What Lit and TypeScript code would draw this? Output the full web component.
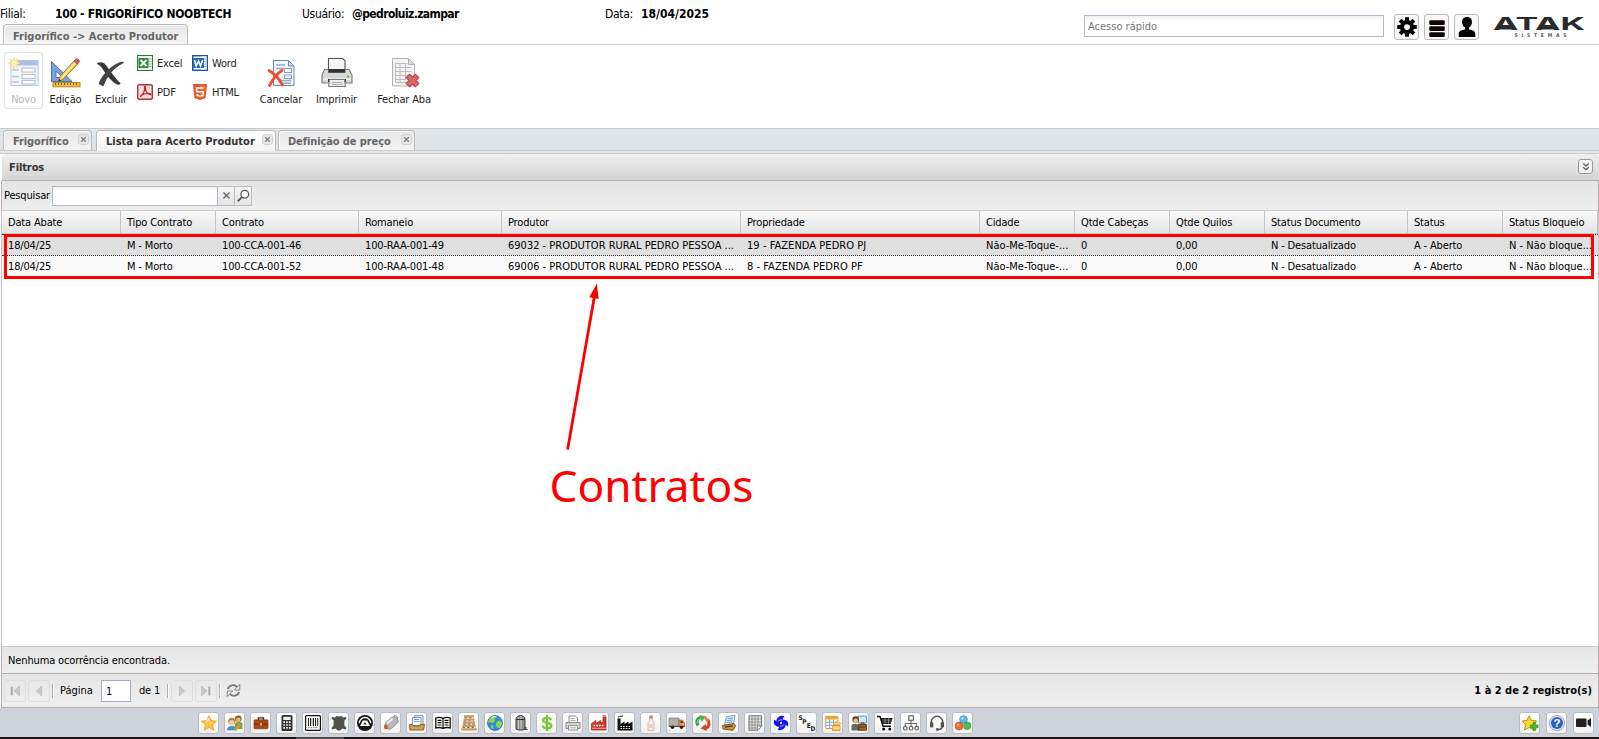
import { LitElement, html, svg, css } from "lit";
import { customElement, property } from "lit/decorators.js";
import { classMap } from "lit/directives/class-map.js";

/* 16x16 artwork for the shortcut bar and the small toolbar actions */
const ICONS: Record<string, unknown> = {
  star: svg`<path d="M8 .8 10.2 5.6 15.4 6.200 11.600 9.800 12.600 15 8 12.400 3.400 15 4.400 9.800 .6 6.200 5.800 5.600Z" fill="#fcc44a" stroke="#e89d28" stroke-width=".9"/><path d="M8 2.500 9.500 6.300 4 6.800Z" fill="#ffe9a8"/>`,
  people: svg`<path d="M8 9c1-3 7-3 7.500 0v5H8z" fill="#6fae3c"/><circle cx="11.300" cy="3.800" r="3.300" fill="#8d5a2b"/><circle cx="11.300" cy="4.800" r="2.300" fill="#e9b98a"/><path d="M.3 15c0-5 9-5 9.500 0z" fill="#4c93dd" stroke="#2b66ad" stroke-width=".5"/><circle cx="4.800" cy="6.300" r="3.500" fill="#b97f38"/><circle cx="4.800" cy="7.500" r="2.500" fill="#f4cfa3"/><path d="M8 14.800 13.800 8.800" stroke="#f0902a" stroke-width="2.400"/>`,
  briefcase: svg`<path d="M5.500 5V2.800h5V5" fill="none" stroke="#4a2410" stroke-width="1.300"/><rect x="1" y="4.800" width="14" height="9" rx="1" fill="#a64a1c" stroke="#6d2c0e" stroke-width=".6"/><path d="M1 9.200h14" stroke="#6d2c0e"/><rect x="7" y="8.200" width="2" height="2" fill="#e8c070"/>`,
  calc: svg`<rect x="2.500" y="0" width="11" height="16" rx="1.500" fill="#333"/><rect x="4.300" y="1.800" width="7.400" height="3.200" fill="#eee"/><path d="M4.300 7.200h7.400M4.300 10h7.400M4.300 12.900h7.400" stroke="#eee" stroke-width="1.700" stroke-dasharray="1.700 1.100"/>`,
  barcode: svg`<rect x=".6" y=".6" width="14.800" height="14.800" rx="1" fill="#fff" stroke="#111" stroke-width="1.200"/><path d="M3.500 3v8M5.500 3v8M8.500 3v8M10.500 3v8M12.700 3v8" stroke="#222"/><path d="M7 3v8" stroke="#222" stroke-width=".5"/><path d="M3 12.700h10" stroke="#777" stroke-dasharray="1 .6"/>`,
  hide: svg`<path d="M1 2 4 2.600 5.500 1 8 1.500 10.500 1 12 2.600 15 2 15.500 3.500 13.400 5.500 13.400 10.500 15.500 13 14.500 14.500 11.500 13.500 9 15.500H7L4.500 13.500 1.500 14.500 .5 13 2.600 10.500 2.600 5.500 .5 3.500Z" fill="#51524d"/>`,
  atak: svg`<circle cx="8" cy="8" r="8" fill="#161616"/><path d="M2.300 8.200A5.700 5.700 0 0 1 13.700 8.200" fill="none" stroke="#fff" stroke-width="1.300"/><path d="M5.900 5.500h4.200L13 11H3Z" fill="#fff"/><path d="M8 7.300 9.700 9.600H6.300Z" fill="#161616"/>`,
  mouse: svg`<rect x="1.200" y="4.200" width="14.500" height="8.200" rx="4.100" transform="rotate(-42 8 8)" fill="#b9b9b9" stroke="#858585" stroke-width=".8"/><path d="M4 8.500 9.500 3.500" stroke="#eee" stroke-width="1.800"/><path d="M1 11.700c.3-1.700 1.300-2.200 2.500-1.700s2.200 2 1.200 3.500-4 1-3.700-1.800z" fill="#d8543c"/><path d="M14.500 4c0-2.500-1-3.500-3.500-3.700" stroke="#888" fill="none"/>`,
  tray: svg`<path d="M5.500 .6h8.500v9h-8.500z" fill="#e8f0fb" stroke="#5b7fb8" stroke-width=".8"/><path d="M3.500 2.500h8.500v8H3.500z" fill="#fff" stroke="#5b7fb8" stroke-width=".8"/><path d="M5 4.500h5.500M5 6.500h5.500" stroke="#7fa0cc"/><path d="M.5 9.500h3l1 1.500h6l1-1.500h4l-1 5.500H1z" fill="#d6a156" stroke="#7f511a" stroke-width=".9"/>`,
  book: svg`<path d="M.8 3c2.500-1 5-.8 7.200.3 2.200-1.100 4.700-1.300 7.200-.3v10c-2.500-.8-5-.6-7.200.3-2.200-.9-4.700-1.100-7.200-.3z" fill="#fff" stroke="#111" stroke-width="1.300"/><path d="M8 3v10.500M2.500 5.300h4M2.500 7.600h4M2.500 10h4M9.500 5.300h4M9.500 7.600h4M9.500 10h4" stroke="#111" stroke-width="1.200"/>`,
  pallet: svg`<path d="M3 1.300h10M2.600 4.500h10.800M2 7.700h12M1.400 10.900h13.200M.3 14.300h15.400" stroke="#c79a62" stroke-width="2.200"/><path d="M3.500 2.800h9M2.800 6h10.400M2.300 9.200h11.400M1.500 12.500h13" stroke="#84602f" stroke-width=".9" stroke-dasharray="2.500 2"/>`,
  globe: svg`<circle cx="8" cy="8" r="7.500" fill="#2e8fe0" stroke="#1b64ae" stroke-width=".7"/><path d="M3 3.500C5 .8 8 .8 9 2L7.500 4.500 8 6.500 5.500 8 3 7 1.500 8C1 6 2 4.500 3 3.500zM9.500 7l3-1.500 2.500 2c0 3-2 5.500-4 6l-2-3zM4 10l2.500 1-1 3c-1.500-.8-2-2-1.500-4z" fill="#8fd83f"/><path d="M4.500 2.500C6 1.400 8 1.300 9.500 2" stroke="#d8f3ff" stroke-width="1.200" fill="none"/>`,
  silo: svg`<path d="M3 4C3 2 5.500.5 7.500.5S12 2 12 4v10c-2 1.500-7 1.500-9 0z" fill="#8c8c8c" stroke="#333" stroke-width=".9"/><path d="M5.500 2v12M8 1v13" stroke="#c9c9c9" stroke-width="1.200"/><path d="M3 4.500h9M10.500 14.500h4" stroke="#333"/><path d="M12.700 12v3" stroke="#555" stroke-width="1.600"/>`,
  dollar: svg`<path d="M8 0v16" stroke="#6cbf2c" stroke-width="2"/><path d="M12.200 5C11.500 3.300 10 2.800 8 2.800c-2.500 0-4 .9-4 2.500C4 9 12.300 6.600 12.300 10.400c0 1.900-1.800 2.800-4.300 2.800-2.200 0-3.900-.7-4.400-2.400" fill="none" stroke="#75cc31" stroke-width="2.300"/>`,
  printer: svg`<path d="M4 7V1h6.500L12.500 3v4" fill="#fafafa" stroke="#888" stroke-width=".9"/><path d="M1 7.500h14v6H1z" fill="#d9d9d9" stroke="#888"/><path d="M3.500 10.500h9V15h-9z" fill="#f4f4f4" stroke="#888" stroke-width=".9"/><path d="M5.500 3.500h4M5.500 5.500h5M5 12.800h6" stroke="#aaa"/>`,
  factoryRed: svg`<path d="M.5 15V8.500L5 5.500V8.500L9.500 5.500V8L12 7V1.500h3V15z" fill="#cf3a2c" stroke="#9d2118" stroke-width=".7"/><path d="M11.700 0h3.600v2h-3.600z" fill="#e98a7e"/><path d="M2.500 10.500h11" stroke="#fff" stroke-width="1.600" stroke-dasharray="1.600 1.200"/><path d="M1 13.300h14" stroke="#f0b0a4"/>`,
  factory: svg`<path d="M.5 15.500V3.500h3V9L7.500 6.500V9L11.500 6.500V9L15.500 6.500v9z" fill="#111"/><path d="M1 2.300C3 .2 4 2.200 6 .8" stroke="#111" fill="none"/><path d="M3.500 11.500h10M3.500 13.500h10" stroke="#fff" stroke-width="1.100" stroke-dasharray="1.400 1.300"/>`,
  bottle: svg`<path d="M6.500 3.500h3v2l1.500 2V15.500H5V7.500l1.500-2z" fill="#f7ece4" stroke="#c9aa9a" stroke-width=".7"/><path d="M6.300.5h3.400v2.800H6.300z" fill="#b4836a"/><path d="M5.500 9h5v4h-5z" fill="#e9cdbd"/>`,
  truck: svg`<path d="M0 3h10v8H0z" fill="#adadad" stroke="#777" stroke-width=".7"/><path d="M10 5h3.500L15.700 8v3.500H10z" fill="#ea9a55" stroke="#8d5529" stroke-width=".7"/><path d="M11.300 6h2l1.200 2h-3.200z" fill="#444"/><path d="M0 11.500h15.500" stroke="#643f28"/><circle cx="3.500" cy="12.300" r="1.700" fill="#222"/><circle cx="12.500" cy="12.300" r="1.700" fill="#222"/>`,
  recycle: svg`<path d="M3 10.500C.8 6.500 2 3.500 5.500 2.500" fill="none" stroke="#2f9e38" stroke-width="3.200"/><path d="M4.500 0l6.500 1.500L6.500 7z" fill="#46b34a"/><path d="M2.300 8.500C1.700 6.500 2.500 4.700 4.500 3.800" stroke="#a5dfa4" stroke-width="1" fill="none"/><path d="M12.500 4.500c2.800 3 1.800 7-1.500 8.500" fill="none" stroke="#d9432c" stroke-width="3.200"/><path d="M12 16 5.500 13.500 10.500 9z" fill="#d9432c"/><path d="M9.500 1.500 12.500 6" stroke="#f0826c" stroke-width="3"/>`,
  papers: svg`<path d="M5.500 1.500 14 .5 12.500 9 3.500 10z" fill="#e6f3ff" stroke="#4d84b8" stroke-width=".8"/><path d="M6.500 3.500 12 3M6 5.500 11.500 5M5.500 7.500 11 7" stroke="#5b9bd2"/><path d="M1.500 10.500 13 8.500 14.500 11 12 15.300 2 14z" fill="#c9903e" stroke="#7c4c15" stroke-width=".9"/><path d="M4 12 11.500 10.800" stroke="#5c3a10" stroke-width="1.300"/>`,
  grid: svg`<path d="M2 .8h12.500v10.500L10.500 15.300H2z" fill="#e2e2e2" stroke="#777" stroke-width="1.100"/><path d="M2 4h12.500M2 7h12.500M2 10h12.500M2 13h9M5 1v14M8 1v14M11 1v10.500" stroke="#8c8c8c" stroke-width=".9"/><path d="M14.500 11.300h-4v4z" fill="#fff" stroke="#777" stroke-width=".7"/>`,
  pinwheel: svg`<g fill="#1414f0"><path d="M7.500 7.500H3.500C3 4 5 1.500 8.500 .8L11.500 1 9.800 3.500 9.500 7z"/><path d="M8.500 7.500V4.500C12 4 14.500 5.500 15.200 8L15 11.500 12.500 9.800 9 9.500z"/><path d="M8.500 8.500H12.500C13 12 11 14.500 7.500 15.200L4.500 15 6.200 12.500 6.500 9z"/><path d="M7.500 8.500V12C4 12 1.500 10.500 .8 8L1 4.500 3.500 6.200 7 6.500z"/></g><path d="M5 6.500c1-1.500 2.500-2 4-1.500M11 9.500c-1 1.500-2.500 2-4 1.500" fill="none" stroke="#fff" stroke-width=".7"/><circle cx="8" cy="8" r=".9" fill="#fff"/>`,
  sped: svg`<g font-family="DejaVu Sans" font-size="6.500" font-weight="700" fill="#222"><text x="-.5" y="4.500">S</text><text x="3.300" y="9">P</text><text x="7.700" y="13">E</text><text x="11.600" y="16">D</text></g>`,
  tableCoins: svg`<path d="M.8 1.500h12v12H.8z" fill="#fff" stroke="#e9962e"/><path d="M1 2h11.500v2.500H1z" fill="#f3a53c"/><path d="M1 7.300h11.500M1 10.300h11.500M4.700 4.500v9M8.600 4.500v9" stroke="#6ba7dc"/><ellipse cx="12" cy="8.500" rx="3.500" ry="1.500" fill="#ffdc73" stroke="#d08b1c" stroke-width=".7"/><path d="M7.500 10.500h7.500v5H7.500z" fill="#f4b942" stroke="#d08b1c" stroke-width=".7"/><path d="M7.500 12h7.500M7.500 13.700h7.500" stroke="#fff0b5" stroke-width=".7"/>`,
  userCase: svg`<path d="M7 1h8.500v7H7z" fill="#cce6fb" stroke="#5492c8"/><path d="M.5 15.500V11c0-3 7.500-3 7.500 0v4.500z" fill="#5d6b62"/><circle cx="4.700" cy="4.500" r="3.300" fill="#6b3e18"/><circle cx="4.700" cy="5.700" r="2.300" fill="#f0c195"/><path d="M7.500 9.500h8v5.800h-8z" fill="#a6602a" stroke="#60300e" stroke-width=".8"/><path d="M10 9.300V8h3v1.300M7.500 12h8" stroke="#60300e" fill="none"/>`,
  cart: svg`<path d="M0 1.500h3L6 11.300h8" fill="none" stroke="#111" stroke-width="1.400"/><path d="M3.500 3H15.700L13.700 9H5.300z" fill="#111"/><path d="M5 5h10M5.500 7h9M8 3v6M11.500 3v6" stroke="#fff" stroke-width=".4"/><circle cx="6.700" cy="13.900" r="1.500" fill="#111"/><circle cx="12.800" cy="13.900" r="1.500" fill="#111"/>`,
  org: svg`<g fill="#fff" stroke="#666" stroke-width="1.200"><rect x="5.800" y=".8" width="4.500" height="4.500"/><circle cx="2.300" cy="13.200" r="1.800"/><circle cx="8" cy="13.200" r="1.800"/><circle cx="13.700" cy="13.200" r="1.800"/></g><path d="M8 5.500v5.500M2.300 11V8.500h11.400V11" fill="none" stroke="#666"/>`,
  headset: svg`<path d="M2.300 10V7a5.700 5.700 0 0 1 11.400 0v3c0 3-1.500 4.500-5 4.700" fill="none" stroke="#555" stroke-width="1.500"/><rect x="1" y="7" width="3.300" height="5.500" rx="1.300" fill="#555"/><rect x="11.700" y="7" width="3.300" height="5.500" rx="1.300" fill="#555"/><circle cx="8.300" cy="14.400" r="1.400" fill="#555"/>`,
  balls: svg`<path d="M8 4 4 11M8 4l4 7" stroke="#888"/><circle cx="8.500" cy="4.500" r="3.900" fill="#5cb7e8" stroke="#2f86bd" stroke-width=".6"/><circle cx="4" cy="11" r="3.900" fill="#ee6b33" stroke="#be4415" stroke-width=".6"/><circle cx="12.200" cy="10.800" r="3.700" fill="#59b957" stroke="#2d8a32" stroke-width=".6"/><circle cx="7.500" cy="3.300" r="1.100" fill="#d3f0ff"/><circle cx="3" cy="10" r="1.100" fill="#ffc5a8"/>`,
  starAdd: svg`<path d="M7 .8 9.200 5.200 14.500 6 11 9.500 12 14.800 7.200 12.500 2.500 15 3.500 9.800 .3 6 5 5.300Z" fill="#ffd630" stroke="#b08a10" stroke-width=".9"/><path d="M11 7.500h2.700V10H16v2.800h-2.300v2.700H11v-2.700H8.500V10H11z" fill="#44b92b" stroke="#2a8518" stroke-width=".6"/>`,
  help: svg`<circle cx="8" cy="8" r="7.600" fill="#dfe6f3" stroke="#8b97ad" stroke-width=".8"/><circle cx="8" cy="8" r="6" fill="#2c5fbe"/><text x="8" y="12.200" text-anchor="middle" font-family="Liberation Sans" font-size="11.500" font-weight="700" fill="#fff">?</text>`,
  camera: svg`<rect x="0" y="3.500" width="10.500" height="8.500" rx=".8" fill="#231f20"/><path d="M15 3v9L11.500 9.500v-4z" fill="#231f20"/>`,
  excel: svg`<rect x=".5" y=".5" width="15" height="15" fill="#eaf5e6" stroke="#2c7a34"/><rect x="9" y="1.500" width="5.500" height="13" fill="#fff"/><path d="M11.500 4h3M11.500 6.500h3M11.500 9h3M11.500 11.500h3" stroke="#7fb784"/><rect x="1.500" y="3" width="10" height="10" fill="#2f8a3c"/><path d="M3.500 5l6 6M9.500 5l-6 6" stroke="#fff" stroke-width="1.900"/>`,
  word: svg`<rect x=".7" y=".7" width="14.600" height="14.600" fill="#eaf1fb" stroke="#1f559e" stroke-width="1.400"/><rect x="9" y="1.500" width="5.500" height="13" fill="#fff"/><path d="M12 4h2.500M12 6.500h2.500M12 9h2.500M12 11.500h2.500" stroke="#86a9db"/><rect x="1" y="3" width="11" height="10" fill="#2365b6"/><path d="M2.500 5l1.700 6 2.300-5 2 5L10.700 5" fill="none" stroke="#fff" stroke-width="1.600"/>`,
  pdf: svg`<rect x=".7" y=".7" width="14.600" height="14.600" rx="1.500" fill="#f6dedd" stroke="#b03238" stroke-width="1.400"/><path d="M3 13C6 10.500 8 7 7.500 3.300 7.300 1.800 8.800 2 8.500 4 8.200 7 10.500 10.500 13.300 10.700c1.200 0 .7-1.200-1.300-1.200C9 9.500 5.500 10.300 3.300 11.800" fill="none" stroke="#b8242c" stroke-width="1.200"/>`,
  html5: svg`<path d="M1 0h14l-1.300 14L8 16 2.300 14z" fill="#e4552b"/><path d="M8 1.200h5.700L12.600 13 8 14.600z" fill="#f1662f"/><path d="M11.800 4H4.500l.3 3.800h6.500L11 11.500 8 12.300 5.200 11.500V10" fill="none" stroke="#fff" stroke-width="1.500"/>`,
  first: svg`<path d="M4.300 3v10" stroke="#aaa" stroke-width="2.300"/><path d="M13 2.500v11L7 8z" fill="#c9c9c9" stroke="#b0b0b0" stroke-width=".7"/>`,
  prev: svg`<path d="M11 2.500v11L5 8z" fill="#c9c9c9" stroke="#b0b0b0" stroke-width=".7"/>`,
  next: svg`<path d="M5 2.500v11L11 8z" fill="#c9c9c9" stroke="#b0b0b0" stroke-width=".7"/>`,
  last: svg`<path d="M11.800 3v10" stroke="#aaa" stroke-width="2.300"/><path d="M3 2.500v11L9 8z" fill="#c9c9c9" stroke="#b0b0b0" stroke-width=".7"/>`,
  refresh: svg`<g fill="none" stroke="#777" stroke-width="2"><path d="M2 6.500C3.300 2 9 1 12 4.300"/><path d="M14 9.500c-1.300 4.500-7 5.500-10 2.200"/></g><path d="M14.700 1.500v6H8.800zM1.300 14.500v-6h5.900z" fill="#eee" stroke="#777" stroke-width=".9"/>`,
  close: svg`<rect x="1" y="1" width="14" height="14" rx="3" fill="#eee" stroke="#c6c6c6" stroke-width="1.300"/><path d="M4.500 4.500l7 7M11.500 4.500l-7 7" stroke="#8c8c8c" stroke-width="2.400"/>`,
  clear: svg`<path d="M3.500 3.500l9 9M12.500 3.500l-9 9" stroke="#666" stroke-width="2"/>`,
  search: svg`<circle cx="10" cy="6" r="4.400" fill="#fafafa" stroke="#555" stroke-width="1.400"/><path d="M6.800 9.300 2 14" stroke="#555" stroke-width="2"/>`,
  chevrons: svg`<path d="M3.500 2.500 8 6.200l4.500-3.700M3.500 8.500 8 12.300l4.500-3.800" fill="none" stroke="#555" stroke-width="2"/>`,
  gear: svg`<g stroke="#000" stroke-width="3.200"><path d="M8 .2v15.600M.2 8h15.600M2.500 2.500l11 11M13.500 2.500l-11 11"/></g><circle cx="8" cy="8" r="5.700" fill="#000"/><circle cx="8" cy="8" r="2.300" fill="#f8f8f8"/>`,
  bars: svg`<g fill="#100505"><rect x="1.800" y="2.500" width="12.400" height="3.900" rx="1"/><rect x="1.800" y="7.300" width="12.400" height="3.900" rx="1"/><rect x="1.800" y="12.100" width="12.400" height="3.900" rx="1"/></g>`,
  user: svg`<ellipse cx="8" cy="4.200" rx="4" ry="4.500" fill="#000"/><path d="M6.400 7h3.200v3c3 .4 5 1.400 5 3.300V16H1.400v-2.700c0-1.900 2-2.900 5-3.300z" fill="#000"/>`,
};

/* 32x32 artwork for the main toolbar actions */
const LARGE: Record<string, unknown> = {
  novo: svg`<rect x="3" y="3.500" width="27" height="25" fill="#f4f7fc" stroke="#b6c4dc"/><path d="M3 4h27v4.500H3z" fill="#a9c2ea"/><path d="M4 13h7M4 19.500h7M4 25h7" stroke="#b9c3d4" stroke-width="1.300"/><g fill="#fff" stroke="#b9c3d4" stroke-width="1.200"><rect x="14" y="11" width="13" height="4"/><rect x="14" y="17.500" width="13" height="4"/><rect x="14" y="23.500" width="13" height="3.500"/></g><path d="M6 .5v11M.5 6h11M2 2l8 8M10 2l-8 8" stroke="#fbe08d" stroke-width="1.800"/><circle cx="6" cy="6" r="2.700" fill="#fff3b8"/>`,
  edicao: svg`<path d="M1.500 4.500v20H22z" fill="#7fa1e4" stroke="#4a6fbd"/><path d="M6 14v6.500h7z" fill="#fff" stroke="#4a6fbd"/><rect x="3" y="25.500" width="27" height="4.300" fill="#f0c23b" stroke="#b58a1e"/><path d="M5.500 26v2M8.500 26v2M11.500 26v2M14.500 26v2M17.500 26v2M20.500 26v2M23.500 26v2M26.500 26v2" stroke="#7c5c10"/><path d="M8.500 24.500 10 19.500 24 4 27.500 7 13 22.500z" fill="#f8ce52" stroke="#a07a26"/><path d="M11.500 21 25.500 5.500" stroke="#fff0ab" stroke-width="1.300"/><path d="M24 4 26 2c1.500-.8 4 1.200 3.400 2.900L27.500 7z" fill="#d4565e" stroke="#9a3a42" stroke-width=".7"/><path d="M8.500 24.500l.8-2.500 1.600 1.500z" fill="#222"/>`,
  excluir: svg`<path d="M3 6.500C8.500 4.500 10.500 9 14.500 14.500c4 5.500 6.500 9 10 12l-2 .3C17.500 24.500 14.500 20.500 11 15.500 8.500 11.500 6.500 8 3 6.500z" fill="#333" stroke="#3b3b3b" stroke-width="1.800" stroke-linejoin="round"/><path d="M28 5.500C20 6 8 17 4.500 26.500l3.500 1.800C11 19 19 9.500 28 5.500z" fill="#444" stroke="#444" stroke-width="1.500" stroke-linejoin="round"/>`,
  cancelar: svg`<path d="M8.500 3.500h15l5.500 5.500v19.500H8.500z" fill="#f4f8fd" stroke="#6d8ab5"/><path d="M23.500 3.500V9H29z" fill="#cfdcf0" stroke="#6d8ab5"/><path d="M11 8h9M11 11.500h8M15 23.500h11M15 26h11" stroke="#8ea8cf" stroke-width="1.300"/><g fill="#fff" stroke="#7f9bc6"><rect x="19.500" y="11.500" width="7" height="4"/><rect x="19.500" y="18" width="7" height="3.500"/></g><path d="M4 13.500C10 17 14 21.500 17.500 28M17 13.500C11 17 8 22 4.500 28.500" fill="none" stroke="#f04d2d" stroke-width="2.800" stroke-linecap="round"/>`,
  imprimir: svg`<path d="M7.500 14V1.500h14l2.500 2v10.500" fill="#f5f5f5" stroke="#555" stroke-width="1.100"/><path d="M3.500 12.500h4v3h16.500v-3h4L31 18v8H1v-8z" fill="#d8d8d8" stroke="#777" stroke-width="1.100"/><path d="M7.500 12h16.500v3.500H7.500z" fill="#333"/><path d="M2 22h28" stroke="#fff"/><path d="M7 22h18v3H7z" fill="#333"/><path d="M8.500 22.500h15l1 7h-17z" fill="#efefef" stroke="#777"/><path d="M11 25.500h10M11 27.500h11" stroke="#aaa"/><circle cx="27" cy="19.500" r="1.300" fill="#5fbe3d"/>`,
  fechar: svg`<g transform="translate(1 0)"><path d="M3.500 1.500h16L25.500 7.500v21.500h-22z" fill="#f4f4f4" stroke="#b3b3b3"/><path d="M19.500 1.500V7.500h6z" fill="#ddd" stroke="#b3b3b3"/><path d="M6.500 6.500h12M6.500 10.500h16M6.500 14.500h16M6.500 18.500h16M6.500 22.500h10M6.500 6.500v19h11M11 6.500v19M16.500 6.500v16" fill="none" stroke="#bdbdbd"/><path d="M18.500 18.500 28.500 28.500M28.500 18.500 18.500 28.500" stroke="#b0343c" stroke-width="6"/><path d="M19 19 28 28M28 19 19 28" stroke="#d9656b" stroke-width="4"/></g>`,
};

@customElement("ui-icon")
class UiIcon extends LitElement {
  @property() name = "";
  static styles = css`
    :host { display: block; flex: none; width: 16px; height: 16px; }
    .art { display: block; width: 100%; height: 100%; overflow: visible; }
  `;
  render() {
    const large = this.name in LARGE;
    return html`<svg class="art" viewBox=${large ? "0 0 32 32" : "0 0 16 16"}>${large ? LARGE[this.name] : ICONS[this.name]}</svg>`;
  }
}

const HEADERS = ["Data Abate", "Tipo Contrato", "Contrato", "Romaneio", "Produtor", "Propriedade", "Cidade", "Qtde Cabeças", "Qtde Quilos", "Status Documento", "Status", "Status Bloqueio"];
const ROWS = [
  ["18/04/25", "M - Morto", "100-CCA-001-46", "100-RAA-001-49", "69032 - PRODUTOR RURAL PEDRO PESSOA ...", "19 - FAZENDA PEDRO PJ", "Não-Me-Toque-...", "0", "0,00", "N - Desatualizado", "A - Aberto", "N - Não bloque..."],
  ["18/04/25", "M - Morto", "100-CCA-001-52", "100-RAA-001-48", "69006 - PRODUTOR RURAL PEDRO PESSOA ...", "8 - FAZENDA PEDRO PF", "Não-Me-Toque-...", "0", "0,00", "N - Desatualizado", "A - Aberto", "N - Não bloque..."],
];
const SHORTCUTS = ["star", "people", "briefcase", "calc", "barcode", "hide", "atak", "mouse", "tray", "book", "pallet", "globe", "silo", "dollar", "printer", "factoryRed", "factory", "bottle", "truck", "recycle", "papers", "grid", "pinwheel", "sped", "tableCoins", "userCase", "cart", "org", "headset", "balls"];

@customElement("app-root")
class AppRoot extends LitElement {
  static styles = css`
    :host {
      display: flex; flex-direction: column; position: relative; box-sizing: border-box;
      width: 100%; height: 739px; overflow: hidden; background: #fff; color: #000;
      font: 11px/14px "DejaVu Sans Condensed", "DejaVu Sans", "Noto Sans", sans-serif;
      font-stretch: condensed; letter-spacing: -0.16px;
    }
    * { box-sizing: border-box; }
    .tab, .title { letter-spacing: -0.1px; }

    .top { display: flex; height: 44px; flex: none; }
    .left { width: 1084px; display: flex; flex-direction: column; }
    .info { display: grid; grid-template-columns: 55px 247px 50px 253px 36px auto; height: 25px; padding-top: 6px; font-size: 12px; line-height: 16px; white-space: nowrap; justify-content: start; }
    .info span { letter-spacing: -0.3px; }
    .info b { letter-spacing: -0.3px; }
    .info .user { letter-spacing: -0.6px; }
    .info .date { letter-spacing: 0; }
    .tools { display: flex; align-items: flex-start; flex: 1; }
    .quick { width: 300px; height: 22px; margin-top: 15px; border: 1px solid #b5b8c8; background: linear-gradient(#eef0f1, #fff 5px); padding: 4px 3px 0; line-height: 14px; color: #777; font-size: 11px; letter-spacing: 0; }
    .square { display: grid; place-items: center; width: 25px; height: 26px; margin: 14px 0 0 5px; border: 1px solid #bbb; border-radius: 3px; background: #f8f8f8; }
    .square.lead { margin-left: 10px; }
    .square ui-icon { width: 20px; height: 20px; }
    .logo { width: 94px; height: 24px; margin: 15px 0 0 14px; overflow: visible; }

    .tab { display: flex; align-items: flex-start; height: 20px; border: 1px solid #bbb; border-bottom: 0; border-radius: 4px 4px 0 0; background: linear-gradient(#e8e8e8, #f3f3f3); box-shadow: inset 1px 1px #fff; padding: 3px 2px 0 9px; color: #666; font-weight: bold; white-space: nowrap; }
    .tab .label { flex: 1; padding-top: 1px; }
    .tab ui-icon { width: 11px; height: 11px; margin-top: 0; }
    .tab.active { background: linear-gradient(#fff, #f4f4f4); color: #333; height: 21px; }
    .tab.module { width: 185px; margin-left: 3px; padding-top: 4px; height: 21px; letter-spacing: 0; }

    .ribbon { display: flex; height: 85px; flex: none; border-top: 1px solid #ccc; border-bottom: 1px solid #ccc; padding: 7px 0 0 4px; background: #fff; color: #222; }
    .action { display: flex; flex-direction: column; align-items: center; height: 57px; padding-top: 4px; gap: 4px; border: 1px solid transparent; white-space: nowrap; }
    .action ui-icon { width: 32px; height: 32px; }
    .action.off { border-color: #e2e2e2; border-radius: 3px; color: #b9b9b9; }
    .a0 { width: 39px; } .a1 { width: 39px; margin-left: 3px; } .a2 { width: 40px; margin-left: 6px; }
    .a3 { width: 50px; margin-left: 9px; } .a4 { width: 49px; margin-left: 6px; } .a5 { width: 64px; margin-left: 11px; }
    .exports { display: grid; grid-template-columns: 55px 55px; grid-auto-rows: 29px; padding: 3px 0 0 6px; }
    .export { display: flex; gap: 4px; height: 16px; align-items: center; }
    .export span { padding-top: 1px; }

    .tabs { display: flex; height: 22px; flex: none; padding: 1px 0 0 3px; background: linear-gradient(#dfe6ea, #e0e3ea); border-bottom: 1px solid #ccc; }
    .t0 { width: 89px; } .t1 { width: 180px; margin-left: 4px; letter-spacing: 0; } .t2 { width: 137px; margin-left: 2px; }
    .strip { height: 3px; flex: none; background: #e6e6e6; border-bottom: 1px solid #ccc; }
    .title { display: flex; align-items: center; justify-content: space-between; height: 27px; flex: none; margin-left: 2px; padding: 0 7px; border-bottom: 1px solid #b9aeae; border-radius: 4px 4px 0 0; background: linear-gradient(#f0f0f0, #d4d4d4); color: #333; font-weight: bold; }
    .title span { padding-top: 1px; }
    .expand { display: grid; place-items: center; width: 15px; height: 15px; border: 1px solid #999; border-radius: 3px; background: #f4f4f4; margin: 0 -1px 1px 0; }
    .expand ui-icon { width: 10px; height: 10px; }
    .search { display: flex; align-items: center; height: 29px; flex: none; padding-left: 2px; margin-left: 1px; border-left: 1px solid #b9aeae; border-right: 1px solid #b9aeae; background: linear-gradient(#e4e4e4, #eee); white-space: nowrap; }
    .search label { width: 48px; padding-top: 1px; letter-spacing: -.16px; }
    .field { width: 166px; height: 20px; border: 1px solid #b5b8c8; background: linear-gradient(#f0f0f0, #fff 4px); }
    .trigger { display: grid; place-items: center; width: 17px; height: 20px; border: 1px solid #bbb; border-left: 0; background: linear-gradient(#f6f6f6, #e4e4e4); }
    .trigger .small { width: 11px; height: 11px; }
    .trigger .lens { width: 14px; height: 14px; }

    .grid { flex: 1; margin: 0 1px 0 2px; border-top: 1px solid #ccc; outline: 1px solid #c8c4c4; clip-path: inset(0 -1px); }
    .row { display: grid; grid-template-columns: 119px 95px 143px 143px 239px 239px 95px 95px 95px 143px 95px 95px; }
    .cell { overflow: hidden; white-space: nowrap; padding-left: 6px; }
    .head { height: 23px; background: linear-gradient(#f9f9f9, #e3e4e6); border-bottom: 1px solid #c5c5c5; }
    .head .cell { border-right: 1px solid #c5c5c5; line-height: 24px; }
    .body { height: 21px; line-height: 21px; background: #fafafa; }
    .body .cell:nth-child(5) { letter-spacing: 0; }
    .body .cell:nth-child(6) { letter-spacing: .05px; }
    .body .cell:nth-child(7), .body .cell:nth-child(12) { letter-spacing: 0; }
    .body.selected { height: 22px; background: #dfdfdf; border-bottom: 1px dotted #333; border-top: 1px dotted #333; line-height: 22px; }

    .status { height: 27px; flex: none; margin-left: 1px; padding: 7px 6px 0; border: 1px solid #b9aeae; border-top-color: #ccc; border-bottom: 0; background: linear-gradient(#e6e6e6, #eee); letter-spacing: -.13px; }
    .pager { display: flex; align-items: center; height: 35px; flex: none; margin-left: 1px; padding: 0 6px 0 2px; border: 1px solid #b9aeae; background: linear-gradient(#e6e6e6, #efefef); white-space: nowrap; }
    .nav { display: grid; place-items: center; width: 22px; height: 22px; margin-right: 2px; border: 1px solid #ddd; border-radius: 3px; }
    .nav ui-icon { width: 14px; height: 14px; }
    .rule { width: 2px; height: 14px; border-left: 1px solid #b0afa2; border-right: 1px solid #fff; }
    .page { width: 47px; padding: 1px 0 0 6px; letter-spacing: 0; }
    .number { width: 30px; height: 22px; border: 1px solid #a9adc4; background: #fff; padding: 4px 4px 0; }
    .of { width: 36px; padding: 1px 0 0 8px; }
    .rule.mid { margin-right: 2px; }
    .pager .reload { width: 15px; height: 15px; margin-left: 5px; }
    .total { margin-left: auto; padding-top: 1px; letter-spacing: 0; }

    .dock { display: flex; height: 29px; flex: none; padding: 4px 5px 0 198px; gap: 5px; background: #ced3db; }
    .key { display: grid; place-items: center; width: 21px; height: 22px; border: 1px solid #bdbdbd; border-radius: 3px; background: linear-gradient(#fff, #f1f1f1); }
    .right { display: flex; gap: 6px; margin-left: auto; }
    .edge { display: flex; height: 2px; flex: none; background: #17151a; padding-left: 296px; }
    .edge i { width: 48px; background: #4b4a4e; }

    .notes { position: absolute; left: 0; top: 0; width: 1599px; height: 739px; pointer-events: none; }
  `;

  private action(i: number, icon: string, label: string, off = false) {
    return html`<div class=${classMap({ action: true, off, ["a" + i]: true })}><ui-icon name=${icon}></ui-icon><span>${label}</span></div>`;
  }
  private export(icon: string, label: string) {
    return html`<div class="export"><ui-icon name=${icon}></ui-icon><span>${label}</span></div>`;
  }
  private nav(icon: string) {
    return html`<div class="nav"><ui-icon name=${icon}></ui-icon></div>`;
  }
  private key(icon: string) {
    return html`<div class="key"><ui-icon name=${icon}></ui-icon></div>`;
  }

  render() {
    return html`
      <div class="top">
        <div class="left">
          <div class="info"><span>Filial:</span><b>100 - FRIGORÍFICO NOOBTECH</b><span>Usuário:</span><b class="user">@pedroluiz.zampar</b><span>Data:</span><b class="date">18/04/2025</b></div>
          <div class="tab module"><span class="label">Frigorífico -&gt; Acerto Produtor</span></div>
        </div>
        <div class="tools">
          <div class="quick">Acesso rápido</div>
          <div class="square lead"><ui-icon name="gear"></ui-icon></div>
          <div class="square"><ui-icon name="bars"></ui-icon></div>
          <div class="square"><ui-icon name="user"></ui-icon></div>
          <svg class="logo" viewBox="0 0 94 24">
            <text x="0" y="14.500" font-family="Inter" font-weight="700" font-size="17" letter-spacing="0" textLength="92" lengthAdjust="spacingAndGlyphs" fill="#2b2b2b">ATAK</text>
            <path d="M3 13.300h17M48 13.300h17" stroke="#2b2b2b" stroke-width="2.400"/>
            <text x="21.500" y="21.500" font-family="DejaVu Sans" font-weight="700" font-size="5" letter-spacing="0" textLength="52" fill="#555">SISTEMAS</text>
          </svg>
        </div>
      </div>

      <div class="ribbon">
        ${this.action(0, "novo", "Novo", true)}${this.action(1, "edicao", "Edição")}${this.action(2, "excluir", "Excluir")}
        <div class="exports">${this.export("excel", "Excel")}${this.export("word", "Word")}${this.export("pdf", "PDF")}${this.export("html5", "HTML")}</div>
        ${this.action(3, "cancelar", "Cancelar")}${this.action(4, "imprimir", "Imprimir")}${this.action(5, "fechar", "Fechar Aba")}
      </div>

      <div class="tabs">
        ${["Frigorífico", "Lista para Acerto Produtor", "Definição de preço"].map(
          (label, i) => html`<div class=${classMap({ tab: true, active: i === 1, ["t" + i]: true })}><span class="label">${label}</span><ui-icon name="close"></ui-icon></div>`,
        )}
      </div>
      <div class="strip"></div>
      <div class="title"><span>Filtros</span><div class="expand"><ui-icon name="chevrons"></ui-icon></div></div>
      <div class="search">
        <label>Pesquisar</label><div class="field"></div>
        <div class="trigger"><ui-icon class="small" name="clear"></ui-icon></div>
        <div class="trigger"><ui-icon class="lens" name="search"></ui-icon></div>
      </div>

      <div class="grid">
        <div class="row head">${HEADERS.map((h) => html`<div class="cell">${h}</div>`)}</div>
        ${ROWS.map((r, i) => html`<div class=${classMap({ row: true, body: true, selected: i === 0 })}>${r.map((c) => html`<div class="cell">${c}</div>`)}</div>`)}
      </div>

      <div class="status">Nenhuma ocorrência encontrada.</div>
      <div class="pager">
        ${this.nav("first")}${this.nav("prev")}
        <div class="rule"></div><div class="page">Página</div><div class="number">1</div><div class="of">de 1</div><div class="rule mid"></div>
        ${this.nav("next")}${this.nav("last")}
        <div class="rule"></div><ui-icon class="reload" name="refresh"></ui-icon>
        <b class="total">1 à 2 de 2 registro(s)</b>
      </div>

      <div class="dock">${SHORTCUTS.map((s) => this.key(s))}<div class="right">${["starAdd", "help", "camera"].map((s) => this.key(s))}</div></div>
      <div class="edge"><i></i></div>

      <svg class="notes" viewBox="0 0 1599 739">
        <rect x="5.500" y="235.500" width="1587" height="42" fill="none" stroke="#f00" stroke-width="3"/>
        <path d="M567.600 449.500 594.500 296" stroke="#f00" stroke-width="2.800"/>
        <path d="M596.800 283.500 589.300 297.300 598.700 299z" fill="#f00"/>
        <text x="549.500" y="501.500" font-family="Noto Sans" font-size="43.500" letter-spacing="0" textLength="204" lengthAdjust="spacingAndGlyphs" fill="#f00">Contratos</text>
      </svg>
    `;
  }
}
